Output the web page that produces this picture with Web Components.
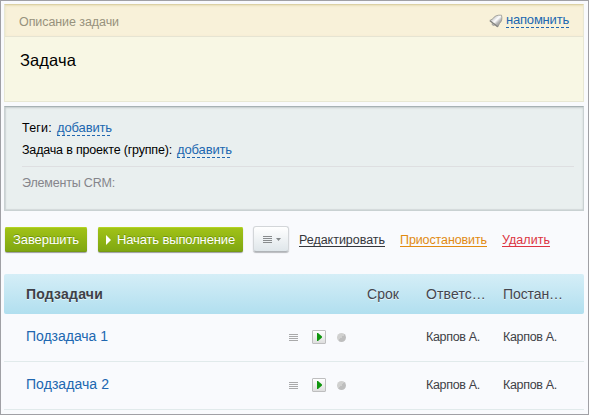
<!DOCTYPE html>
<html lang="ru"><head><meta charset="utf-8"><title>Задача</title>
<style>
body{margin:0;width:589px;height:415px;overflow:hidden;font:13px/16px "Liberation Sans",Arial,sans-serif;color:#000;background:#f9fafd}
</style></head><body>
<task-page></task-page>
<script>
const define=(name,html,init)=>customElements.define(name,class extends HTMLElement{
  connectedCallback(){
    if(this.shadowRoot)return;
    this.attachShadow({mode:'open'}).innerHTML=html;
    if(init)init.call(this,this.shadowRoot);
  }
});
/* Single line of text, tracked to fill the width given in "w". */
define('ui-text',`<style>:host{display:block;flex:none;white-space:nowrap}span{display:inline-block}</style><span><slot></slot></span>`,function(root){
  const s=root.querySelector('span'),w=+this.getAttribute('w');
  s.style.letterSpacing=((w-s.getBoundingClientRect().width)/this.textContent.length).toFixed(3)+'px';
  this.style.width=w+'px';
});
define('dashed-link',`<style>:host{display:block;flex:none;color:#2067b0;height:16px;background:repeating-linear-gradient(90deg,#2067b0 0 3px,transparent 3px 5px) 0 100%/100% 1px no-repeat}</style><slot></slot>`);
define('action-link',`<style>:host{display:block;flex:none;height:13px;line-height:15px;font-size:12.5px;border-bottom:1px solid currentColor}</style><slot></slot>`);
define('icon-bell',`<style>:host{display:block;flex:none;width:14px;height:14px}svg{display:block}</style>
<svg width="14" height="14" viewBox="0 0 14 14"><defs><linearGradient id="g" x1="0" y1="0" x2="1" y2="1"><stop offset="0" stop-color="#999"/><stop offset=".35" stop-color="#e0e0e0"/><stop offset=".48" stop-color="#fff"/><stop offset=".65" stop-color="#b5b5b5"/><stop offset="1" stop-color="#808080"/></linearGradient></defs>
<path d="M3.200 9.200C2.700 11 4 12 5.700 11.200" fill="#aaa" stroke="#999" stroke-width=".7"/><path d="M.8 6.500 4 4.700C5.200 2 8.400.8 12.500 1.200 13.400 4.500 12.800 7.400 10.700 9.200L8.800 12.900Z" fill="url(#g)" stroke="#96968f" stroke-width=".8"/><path d="M1 6.700 8.700 12.700" stroke="#858581" stroke-width="1.400"/></svg>`);
define('icon-lines',`<style>:host{display:block;flex:none;width:9px;height:7px;background:repeating-linear-gradient(var(--c,#a9a9aa) 0 1px,transparent 1px 2px)}</style>`);
define('icon-play',`<style>:host{display:block;flex:none;box-sizing:border-box;width:14px;height:14px;border:1px solid #bebebf;border-radius:1px;background:linear-gradient(#fff,#dedede)}svg{display:block}</style>
<svg width="12" height="12"><path d="M4 2v8h1l4-3.500v-1L5 2z" fill="#10960f"/></svg>`);
define('icon-dot',`<style>:host{display:block;flex:none;width:9px;height:9px;border-radius:50%;background:linear-gradient(135deg,#d0d0cf 50%,#bebebe 50%)}</style>`);
define('green-button',`<style>:host{display:flex;box-sizing:border-box;flex:none;height:25px;padding:5px 8px 0;border-radius:2px;color:#fff;background:linear-gradient(#a2c317,#7ea612);box-shadow:inset 0 1px #b3d321,inset 0 -1px #779a12,0 1px 1px #999ba0;text-shadow:0 -1px #71940f}
svg{display:none;margin:3px 6px 0 0}:host([play]) svg{display:block}</style><svg width="5" height="10"><path d="M0 0 5 5 0 10z" fill="#fff"/></svg><slot></slot>`);
define('menu-button',`<style>:host{display:flex;box-sizing:border-box;flex:none;width:36px;height:26px;padding:9px 0 0 9px;gap:4px;border-radius:3px;border:1px solid #d3d6d9;border-bottom-color:#b0b4b8;background:linear-gradient(#fff,#dfe6ea);box-shadow:0 1px 1px #b8babe}
svg{margin-top:2px}</style><icon-lines style="--c:#888b8d"></icon-lines><svg width="5" height="3"><path d="M0 0h5L2.500 3z" fill="#84888a"/></svg>`);
define('description-panel',`<style>:host{display:block;box-sizing:border-box;height:98px;border:1px solid #e8e7d3;border-top-color:#dcd1a4;background:#f8f7e4}
header{display:flex;justify-content:space-between;box-sizing:border-box;height:32px;padding:7px 14px 0;color:#97927d;background:#f8f1d9;border-bottom:1px solid #e6e4d2;box-shadow:inset 0 2px 2px -1px #e8dfbb,inset 1px 0 2px #f1e9cd}
.t{padding-top:2px;font-size:12.5px}.r{display:flex;color:#2067b0}icon-bell{margin:2px 3px 0 0}.b{padding:13px 15px;font-size:16.500px;line-height:20px}</style>
<header><div class="t"><ui-text w="100">Описание задачи</ui-text></div><div class="r"><icon-bell></icon-bell><dashed-link><ui-text w="63">напомнить</ui-text></dashed-link></div></header>
<div class="b"><ui-text w="56">Задача</ui-text></div>`);
define('details-panel',`<style>:host{display:block;box-sizing:border-box;height:105px;margin-top:4px;padding:13px 9px 0 17px;border:1px solid #c9d1d2;border-top-color:#a7b1b4;background:#e9efef;box-shadow:inset 0 1px 2px #c4cbcc,inset 1px -1px 1px #d4dadb}
.row{display:flex;height:22px;gap:5px;font-size:12.5px}dashed-link{font-size:13px}hr{height:1px;border:0;margin:2px 0 8px;background:#dedfe1}.crm{color:#85858b;font-size:12.5px}</style>
<div class="row"><ui-text w="30">Теги:</ui-text><dashed-link><ui-text w="55">добавить</ui-text></dashed-link></div>
<div class="row"><ui-text w="150">Задача в проекте (группе):</ui-text><dashed-link><ui-text w="55">добавить</ui-text></dashed-link></div><hr>
<div class="crm"><ui-text w="93">Элементы CRM:</ui-text></div>`);
define('task-toolbar',`<style>:host{display:flex;box-sizing:border-box;height:63px;padding:16px 0 0 1px}green-button+green-button{margin-left:11px}menu-button{margin:-1px 10px 0 10px}action-link{margin:6px 15px 0 0}</style>
<green-button><ui-text w="66">Завершить</ui-text></green-button><green-button play><ui-text w="118">Начать выполнение</ui-text></green-button><menu-button></menu-button>
<action-link style="color:#35363b"><ui-text w="86">Редактировать</ui-text></action-link><action-link style="color:#e18a12"><ui-text w="87">Приостановить</ui-text></action-link><action-link style="color:#dc3441"><ui-text w="48">Удалить</ui-text></action-link>`);
define('subtask-row',`<style>:host{display:grid;box-sizing:border-box;height:48px;grid-template-columns:263px 78px 59px 77px 1fr;padding:13px 0 0 22px;border-bottom:1px solid #e1eaeb;font-size:12.5px;line-height:20px;color:#3f4147}
.n{font-size:14px;line-height:18px;color:#2067b0}.i{display:flex}.i>icon-lines{margin-top:7px}.i>icon-play{margin:3px 11px 0 14px}.i>icon-dot{margin-top:6px}</style>
<div class="n"><slot></slot></div><div class="i"><icon-lines></icon-lines><icon-play></icon-play><icon-dot></icon-dot></div><div></div><ui-text w="54">Карпов А.</ui-text><ui-text w="54">Карпов А.</ui-text>`);
define('subtask-table',`<style>:host{display:block}header{display:grid;grid-template-columns:341px 59px 77px 1fr;box-sizing:border-box;height:40px;padding:11px 0 0 22px;border-radius:2px;background:linear-gradient(#d5eef7,#b1dfef);font-size:14px;line-height:18px;color:#45464e;text-shadow:0 1px #fff9}b{color:#3e4047}</style>
<header><b><ui-text w="77">Подзадачи</ui-text></b><ui-text w="32">Срок</ui-text><ui-text w="60">Ответс…</ui-text><ui-text w="60">Постан…</ui-text></header><slot></slot>`);
define('task-page',`<style>:host{display:block;box-sizing:border-box;width:589px;height:415px;padding:3px 4px 0 3px;border:1px solid #a0a0a5;background:#f9fafd}</style>
<description-panel></description-panel><details-panel></details-panel><task-toolbar></task-toolbar>
<subtask-table><subtask-row><ui-text w="82">Подзадача 1</ui-text></subtask-row><subtask-row><ui-text w="83">Подзадача 2</ui-text></subtask-row></subtask-table>`);
</script></body></html>
